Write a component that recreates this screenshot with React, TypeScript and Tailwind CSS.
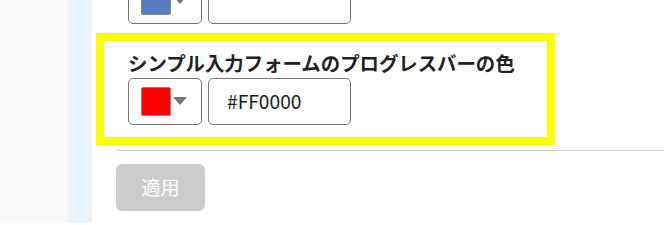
import React from "react";

function Swatch({ color }: { color: string }) {
  return (
    <div className="flex h-[47px] w-[74px] items-center rounded-[5px] border border-[#767676] bg-white pl-[12px]">
      <div className="h-[29px] w-[30px] rounded-[2px] border border-[#8a8a8a]" style={{ backgroundColor: color }} />
      <svg width="14" height="9" viewBox="0 0 14 9" className="ml-[2px]">
        <polygon points="0,0 14,0 7,8" fill="#767676" />
      </svg>
    </div>
  );
}

function TextBox({ value }: { value: string }) {
  return (
    <div className="flex h-[47px] w-[143px] items-center rounded-[5px] border border-[#767676] bg-white pl-[18px] text-[19.2px] text-[#1a1a1a]">
      {value}
    </div>
  );
}

export default function App() {
  return (
    <div className="flex h-[223px] w-[664px] overflow-hidden bg-white font-['Noto_Sans_CJK_JP','Noto_Sans',sans-serif]">
      <div className="w-[68px] shrink-0 bg-[#f9f9f7]" />
      <div className="w-[24px] shrink-0 bg-[#eaf4fd]" />
      <div className="flex flex-1 flex-col pl-[24px]">
        <div className="mt-[-23px] flex gap-[6px] pl-[12px]">
          <Swatch color="#5b7bc1" />
          <TextBox value="" />
        </div>
        <div className="ml-[-20px] mt-[9px] w-[459px] border-8 border-[#ffff00] pb-[12px] pl-[24px] pt-[8px]">
          <div className="mb-[2px] text-[19.4px] font-bold leading-[27px] text-[#222]">
            シンプル入力フォームのプログレスバーの色
          </div>
          <div className="flex gap-[6px]">
            <Swatch color="#ff0000" />
            <TextBox value="#FF0000" />
          </div>
        </div>
        <div className="mt-[5px] h-px bg-[#cccccc]" />
        <div className="mt-[13px]">
          <button className="flex h-[47px] w-[89px] items-center justify-center rounded-[6px] bg-[#cccccc] text-[19.2px] text-white">
            適用
          </button>
        </div>
      </div>
    </div>
  );
}
